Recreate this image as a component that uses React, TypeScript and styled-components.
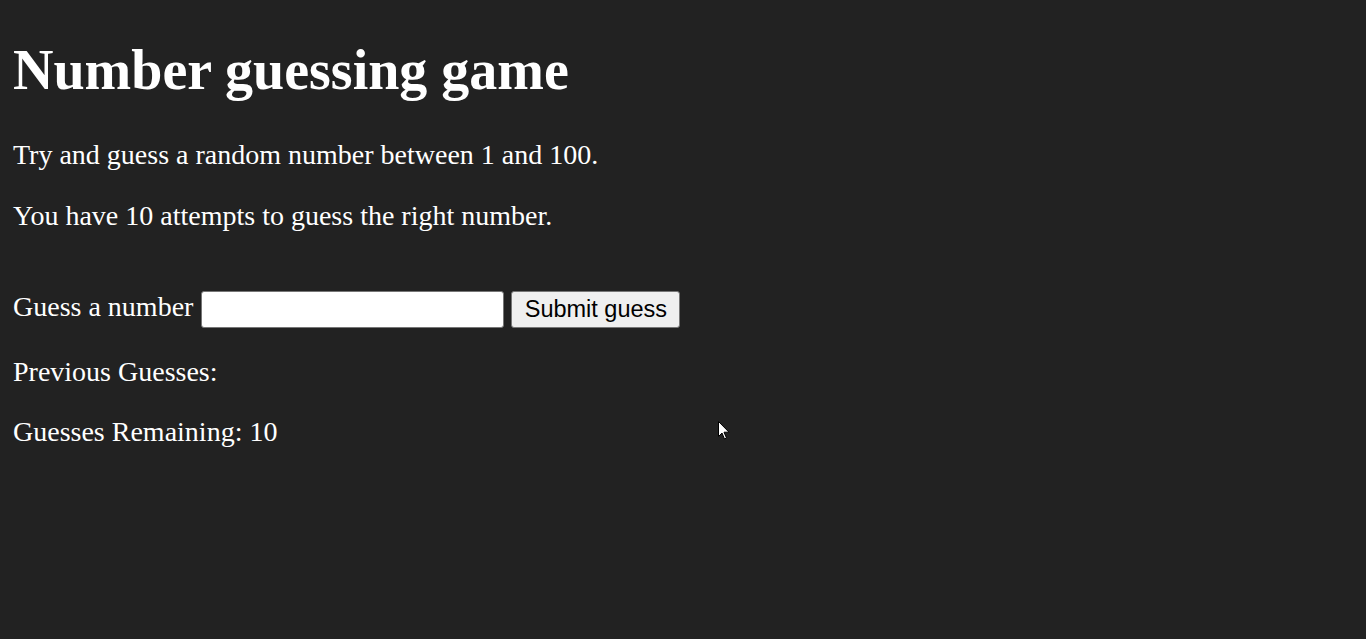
import React from "react";
import styled, { createGlobalStyle } from "styled-components";

const Global = createGlobalStyle`
  html { background: #222222; }
  body {
    margin: 0;
    padding: 0;
    background: #222222;
    font-family: "Liberation Serif", "Times New Roman", serif;
    color: #ffffff;
  }
`;

const Page = styled.main`
  position: relative;
  box-sizing: border-box;
  min-height: 100vh;
  padding: 37.5px 13px 0 13px;
  font-size: 28px;
`;

const Title = styled.h1`
  margin: 0 0 37.5px;
  font-size: 56px;
  line-height: 64.4px;
  font-weight: bold;
`;

const Para = styled.p<{ $after?: number }>`
  margin: 28px 0 ${(p) => p.$after ?? 28}px;
  font-size: 28px;
  line-height: 32.2px;
`;

const FormRow = styled.div`
  display: flex;
  align-items: flex-start;
  gap: 7.5px;
  height: 37px;
  font-size: 28px;
  line-height: 32px;
`;

const Label = styled.label`
  white-space: nowrap;
`;

const Field = styled.input`
  box-sizing: border-box;
  width: 303px;
  height: 37px;
  margin: 0;
  padding: 0 3px;
  border: 1.5px solid #767676;
  border-radius: 3px;
  background: #ffffff;
  font-size: 20px;
  font-family: "Liberation Sans", Arial, sans-serif;
`;

const SubmitButton = styled.button`
  box-sizing: border-box;
  width: 169px;
  height: 37px;
  margin: 0;
  padding: 0;
  border: 1.5px solid #767676;
  border-radius: 3px;
  background: #efefef;
  color: #000000;
  font-family: "Liberation Sans", Arial, sans-serif;
  font-size: 23.5px;
  line-height: 1;
`;

const Cursor = styled.svg`
  position: absolute;
  left: 718px;
  top: 421px;
`;

export default function App() {
  return (
    <>
      <Global />
      <Page>
        <Title>Number guessing game</Title>
        <Para>Try and guess a random number between 1 and 100.</Para>
        <Para $after={59}>You have 10 attempts to guess the right number.</Para>
        <FormRow>
          <Label htmlFor="guessField">Guess a number</Label>
          <Field id="guessField" type="text" />
          <SubmitButton type="button">Submit guess</SubmitButton>
        </FormRow>
        <Para>Previous Guesses:</Para>
        <Para>Guesses Remaining: 10</Para>
        <Cursor width="12" height="20" viewBox="0 0 12 20">
          <path d="M0.5 0.5 L0.5 15.5 L4 12 L6.5 18 L8.5 17 L6 11.2 L11 11.2 Z" fill="#ffffff" stroke="#000000" strokeWidth="1" />
        </Cursor>
      </Page>
    </>
  );
}
